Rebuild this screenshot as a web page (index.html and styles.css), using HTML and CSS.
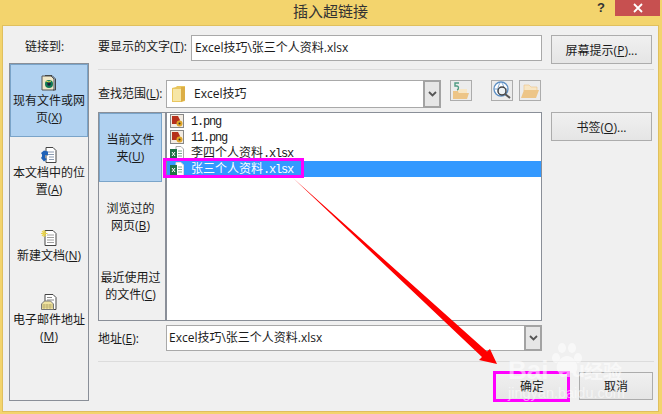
FILE: index.html
```html
<!DOCTYPE html>
<html lang="zh">
<head>
<meta charset="utf-8">
<title>插入超链接</title>
<link rel="stylesheet" href="styles.css">
</head>
<body>
<div class="window">
  <header class="titlebar">
    <div class="title">插入超链接</div>
    <div class="help">?</div>
    <div class="close">
      <svg width="10" height="10" viewBox="0 0 10 10"><path d="M1 1L9 9M9 1L1 9" stroke="#fff" stroke-width="1.8"/></svg>
    </div>
  </header>
  <div class="dialog">
    <aside class="linkcol">
      <div class="linklabel">链接到:</div>
      <nav class="nav">
        <div class="navitem nav-a active">
          <svg class="navicon" width="16" height="16" viewBox="0 0 16 16"><path d="M1 1h9l3 3v11H1z" fill="#efe7c8" stroke="#555"/><path d="M4 0.500h7l3.500 3.500v11H12" fill="none" stroke="#444"/><circle cx="8" cy="9" r="4" fill="#117a55"/><circle cx="8" cy="9" r="1.800" fill="#1d1d3a"/><path d="M5 6l3 1 2-1" stroke="#e8d84a" fill="none"/></svg>
          <div>现有文件或网<br>页(<u>X</u>)</div>
        </div>
        <div class="navitem nav-b">
          <svg class="navicon" width="16" height="16" viewBox="0 0 16 16"><path d="M5 0.500h7l3 3v12H5z" fill="#fff" stroke="#444"/><path d="M7 5h6M7 7.500h6M8 10h5M8 12.500h5" stroke="#8a9ab0"/><path d="M0 6l3-2.500 4 1v4l-3-.5v3l2 1-3 2.500-3-3.500 1-1.500v-2z" fill="#1f62b8"/></svg>
          <div>本文档中的位<br>置(<u>A</u>)</div>
        </div>
        <div class="navitem nav-c">
          <svg class="navicon" width="16" height="16" viewBox="0 0 16 16"><path d="M4 0.500h8l3 3v12H4z" fill="#fff" stroke="#444"/><path d="M6 5h7M6 7.500h7M6 10h7M6 12.500h7" stroke="#a0a0a0"/><path d="M3 0v7M0 3.500h6.500M1 1l4 5M5 1L1 6" stroke="#e8d24a" stroke-width="1.200"/></svg>
          <div>新建文档(<u>N</u>)</div>
        </div>
        <div class="navitem nav-d">
          <svg class="navicon" width="16" height="16" viewBox="0 0 16 16"><path d="M4 0.500h8l3 3v12H4z" fill="#fff" stroke="#444"/><path d="M6 3.500h5M6 6h7" stroke="#888"/><path d="M0.500 10l3-3h6l3 3v5.500H0.500z" fill="#f0e3a0" stroke="#777"/><path d="M1 11h11M1 13h11M3 10v5M6 10v5M9 10v5" stroke="#a89c60" stroke-width=".6"/></svg>
          <div>电子邮件地址<br>(<u>M</u>)</div>
        </div>
      </nav>
    </aside>
    <main class="main">
      <div class="row row-text">
        <label class="label label-wide">要显示的文字(<u>T</u>):</label>
        <div class="input input-text">Excel技巧\张三个人资料.xlsx</div>
        <button class="btn btn-side">屏幕提示(<u>P</u>)...</button>
      </div>
      <div class="sep sep-top"></div>
      <div class="row row-look">
        <label class="label label-narrow">查找范围(<u>L</u>):</label>
        <div class="combo combo-look">
          <svg class="folder" width="14" height="16" viewBox="0 0 14 16"><path d="M0 2l4-1 1-1h8v15l-4 1H0z" fill="#e9c65f"/><path d="M1 3h8v12H1z" fill="#f6e6a6"/><path d="M9 1l4 0v13l-4 2z" fill="#dcae45"/></svg>
          <span class="combo-text">Excel技巧</span>
          <span class="drop"><svg width="9" height="6" viewBox="0 0 9 6"><path d="M1 1l3.500 3.500L8 1" fill="none" stroke="#555" stroke-width="1.800"/></svg></span>
        </div>
        <div class="tool tool-up">
          <svg width="18" height="18" viewBox="0 0 18 18"><path d="M1 9h5l1 2h10l-2 6H1z" fill="#edc587"/><path d="M6 9V7h9v4H7z" fill="#f8e6c4"/><path d="M7 1H3v3h2c2 0 2 3.500 0 4" fill="none" stroke="#4f9b82" stroke-width="1.400"/></svg>
        </div>
        <div class="tool tool-web">
          <svg width="20" height="20" viewBox="0 0 20 20"><circle cx="9" cy="8" r="7" fill="#fff" stroke="#5d8fc4" stroke-width="1.300"/><path d="M2 8h14M9 1c-4 4-4 10 0 14M9 1c4 4 4 10 0 14" fill="none" stroke="#7ba4d0"/><circle cx="10" cy="10" r="4" fill="#eef3f6" stroke="#444" stroke-width="1.500"/><path d="M13 13l5 4" stroke="#555" stroke-width="2"/></svg>
        </div>
        <div class="tool tool-folder">
          <svg width="18" height="16" viewBox="0 0 18 16"><path d="M3 2h5l2 2h6v4H3z" fill="#f8e6c4" stroke="#edc587" stroke-width=".6"/><path d="M3 7h15l-3 8H0z" fill="#edc587"/></svg>
        </div>
      </div>
      <div class="row row-browser">
        <div class="browser">
          <div class="tabs">
            <div class="tab active"><span>当前文件<br>夹(<u>U</u>)</span></div>
            <div class="tab"><span>浏览过的<br>网页(<u>B</u>)</span></div>
            <div class="tab"><span>最近使用过<br>的文件(<u>C</u>)</span></div>
          </div>
          <ul class="files">
            <li class="file">
              <svg class="ficon" width="14" height="14" viewBox="0 0 14 14"><rect x=".5" y=".5" width="13" height="13" fill="#f3ece2" stroke="#888"/><path d="M2 2h6l2 4-2 4H2z" fill="#b5301c"/><circle cx="9.500" cy="9.500" r="3" fill="#e0a526"/><circle cx="9.500" cy="9.500" r="1" fill="#333"/></svg>
              <span class="fname"><span class="lat">1.png</span></span>
            </li>
            <li class="file">
              <svg class="ficon" width="14" height="14" viewBox="0 0 14 14"><rect x=".5" y=".5" width="13" height="13" fill="#f3ece2" stroke="#888"/><path d="M2 2h6l2 4-2 4H2z" fill="#b5301c"/><circle cx="9.500" cy="9.500" r="3" fill="#e0a526"/><circle cx="9.500" cy="9.500" r="1" fill="#333"/></svg>
              <span class="fname"><span class="lat">11.png</span></span>
            </li>
            <li class="file">
              <svg class="ficon" width="14" height="14" viewBox="0 0 14 14"><path d="M6 .5h5l2.500 2.500v10.500H6z" fill="#fff" stroke="#aaa"/><path d="M8 5h4M8 7.500h4M8 10h4" stroke="#7fae8f"/><rect x="0" y="3" width="7" height="10" fill="#1e7145"/><path d="M2 6l3 4M5 6l-3 4" stroke="#fff"/></svg>
              <span class="fname">李四个人资料<span class="lat">.xlsx</span></span>
            </li>
            <li class="file selected">
              <svg class="ficon" width="14" height="14" viewBox="0 0 14 14"><path d="M6 .5h5l2.500 2.500v10.500H6z" fill="#fff" stroke="#ddd"/><path d="M8 5h4M8 7.500h4M8 10h4" stroke="#7fae8f"/><rect x="0" y="3" width="7" height="10" fill="#1e7145"/><path d="M2 6l3 4M5 6l-3 4" stroke="#fff"/></svg>
              <span class="fname">张三个人资料<span class="lat">.xlsx</span></span>
            </li>
          </ul>
        </div>
        <button class="btn btn-side">书签(<u>O</u>)...</button>
      </div>
      <div class="row row-addr">
        <label class="label label-narrow">地址(<u>E</u>):</label>
        <div class="combo combo-addr">
          <span class="combo-text">Excel技巧\张三个人资料.xlsx</span>
          <span class="drop"><svg width="9" height="6" viewBox="0 0 9 6"><path d="M1 1l3.500 3.500L8 1" fill="none" stroke="#555" stroke-width="1.800"/></svg></span>
        </div>
      </div>
      <div class="sep sep-bottom"></div>
      <div class="row row-actions">
        <button class="btn btn-action">确定</button>
        <button class="btn btn-action">取消</button>
      </div>
    </main>
  </div>

  <div class="mark mark-file"></div>
  <div class="mark mark-ok"></div>
  <svg class="arrow" width="662" height="414" viewBox="0 0 662 414">
    <path d="M293 178L487 351.500 490 349 497 364 479 360 482 357z" fill="#fe0000"/>
  </svg>
  <div class="watermark">
    <svg class="paw" width="36" height="36" viewBox="0 0 36 36"><g fill="#fff"><ellipse cx="8" cy="16" rx="4" ry="5"/><ellipse cx="14" cy="6" rx="4" ry="5"/><ellipse cx="24" cy="6" rx="4" ry="5"/><ellipse cx="30" cy="16" rx="4" ry="5"/><path d="M19 14c6 0 12 8 10 14-2 5-7 2-10 2s-8 3-10-2c-2-6 4-14 10-14z"/></g></svg>
    <span class="wm-baidu">Bai</span><span class="wm-du">du</span><span class="wm-cn">经验</span>
    <span class="wm-url">jingyan.baidu.com</span>
  </div>
</div>
</body>
</html>
```

FILE: styles.css
```css
* { box-sizing: border-box; }
html, body { margin: 0; padding: 0; }
body {
  width: 662px;
  height: 414px;
  overflow: hidden;
  font-family: "Open Sans", "Noto Sans CJK SC", sans-serif;
  font-size: 12px;
  color: #1a1a1a;
}
.window {
  position: relative;
  width: 662px;
  height: 414px;
  background: #f3d46d;
  display: flex;
  flex-direction: column;
}
.titlebar {
  height: 25px;
  display: flex;
  position: relative;
  justify-content: flex-end;
  flex: none;
}
.title {
  position: absolute;
  left: 293px;
  top: 1px;
  font-size: 15px;
  line-height: 20px;
  color: #333;
}
.help {
  width: 14px;
  margin-right: 7px;
  padding-top: 1px;
  text-align: center;
  font: bold 13px/14px "Liberation Sans", sans-serif;
  color: #333;
}
.close {
  width: 45px;
  height: 16px;
  margin-right: 2px;
  background: #c75050;
  display: flex;
  align-items: center;
  justify-content: center;
}
.dialog {
  flex: 1;
  margin: 0 3px 2px 2px;
  background: #f0f0f0;
  border: 1px solid #e0c05e;
  display: flex;
}
.linkcol {
  width: 95px;
  padding-left: 6px;
  flex: none;
}
.linklabel {
  padding-left: 16px;
  height: 37px;
  padding-top: 12px;
  line-height: 17px;
}
.nav {
  width: 80px;
  height: 338px;
  border: 1px solid #8a8f98;
  display: grid;
  grid-template-rows: 73px 83px 64px 1fr;
}
.navitem {
  display: flex;
  flex-direction: column;
  align-items: center;
  text-align: center;
  padding-top: 10px;
  line-height: 17px;
  white-space: nowrap;
}
.navitem.active {
  background: #b1d2f1;
  border: 1px solid #7aa4c9;
}
.navicon { flex: none; margin-bottom: 1px; }
.nav-a { padding-top: 10px; }
.main {
  flex: 1;
  display: flex;
  flex-direction: column;
  padding-top: 9px;
  padding-right: 4px;
  min-width: 0;
}
.row { display: flex; flex: none; }
.label { line-height: 16px; flex: none; white-space: nowrap; }
.label-wide { width: 93px; padding-top: 4px; }
.label-narrow { width: 68px; padding-top: 6px; }
.input, .combo {
  background: #fff;
  border: 1px solid #a9a9a9;
  display: flex;
  align-items: center;
  white-space: nowrap;
}
.row-text { height: 29px; }
.input-text { width: 351px; height: 26px; padding: 0 0 3px 3px; }
.btn {
  font: inherit;
  color: #1a1a1a;
  border: 1px solid #acacac;
  background: linear-gradient(#f0f0f0, #e5e5e5);
  padding: 0;
  flex: none;
}
.btn-side { width: 101px; height: 29px; margin-left: 9px; }
.sep { height: 1px; background: #dcdcdc; flex: none; }
.sep-top { margin-top: 5px; }
.row-look { margin-top: 10px; height: 28px; }
.combo-look { width: 275px; height: 28px; padding-left: 5px; }
.folder { flex: none; margin-right: 8px; }
.combo-text { flex: 1; padding-bottom: 2px; }
.combo-addr .combo-text { padding-left: 2px; }
.drop {
  width: 18px;
  height: calc(100% + 2px);
  margin: -1px -1px -1px 0;
  border: 2px solid #a3a3a3;
  background: #e6e6e6;
  display: flex;
  align-items: center;
  justify-content: center;
  flex: none;
}
.tool {
  width: 22px;
  height: 21px;
  border: 1px solid #acacac;
  background: #ececec;
  display: flex;
  align-items: center;
  justify-content: center;
  flex: none;
}
.tool-up { margin-left: 9px; }
.tool-web { margin-left: 19px; }
.tool-folder { margin-left: 6px; }
.row-browser { margin-top: 4px; height: 209px; }
.browser {
  width: 444px;
  border: 1px solid #8a8f98;
  display: flex;
  overflow: hidden;
}
.tabs {
  width: 68px;
  border-right: 2px solid #8a8f98;
  flex: none;
  display: grid;
  grid-template-columns: 63px;
  grid-template-rows: repeat(3, 69px);
}
.tab {
  display: flex;
  align-items: center;
  justify-content: center;
  text-align: center;
  line-height: 17px;
  white-space: nowrap;
}
.tab.active {
  background: #b1d2f1;
  border: 1px solid #7aa4c9;
}
.files {
  list-style: none;
  margin: 0;
  padding: 0;
  flex: 1;
  background: #fff;
}
.file {
  height: 16px;
  display: flex;
  align-items: center;
  padding-left: 3px;
}
.file.selected { background: #3399ff; color: #fff; }
.ficon { flex: none; margin-right: 7px; }
.fname {
  font-family: "Noto Sans CJK SC", sans-serif;
  font-size: 12px;
  line-height: 16px;
  white-space: nowrap;
}
.lat {
  font-family: "Liberation Mono", monospace;
  font-size: 12px;
  letter-spacing: -1.2px;
}
.row-addr { margin-top: 4px; height: 26px; }
.combo-addr { width: 376px; height: 26px; }
.sep-bottom { margin-top: 10px; }
.row-actions {
  margin-top: 10px;
  justify-content: flex-end;
  gap: 10px;
  padding-right: 1px;
}
.btn-action { width: 74px; height: 28px; }

.mark { position: absolute; border: 3px solid #ff00ff; }
.mark-file { left: 163px; top: 158px; width: 141px; height: 20px; }
.mark-ok { left: 493px; top: 371px; width: 77px; height: 31px; }
.arrow { position: absolute; left: 0; top: 0; }

.watermark {
  position: absolute;
  left: 505px;
  top: 342px;
  width: 125px;
  height: 60px;
  color: #fff;
  opacity: .55;
  white-space: nowrap;
}
.paw { position: absolute; left: 43px; top: 0; }
.wm-baidu, .wm-du, .wm-cn, .wm-url { position: absolute; }
.wm-baidu { left: 3px; top: 13px; font: bold 26px/30px "Liberation Sans", sans-serif; }
.wm-du { left: 53px; top: 13px; font: bold 22px/30px "Liberation Sans", sans-serif; }
.wm-cn { left: 79px; top: 17px; font: bold 19px/24px "Noto Sans CJK SC", sans-serif; }
.wm-url { left: 3px; top: 42px; font: 14.5px/18px "Liberation Sans", sans-serif; }
```
